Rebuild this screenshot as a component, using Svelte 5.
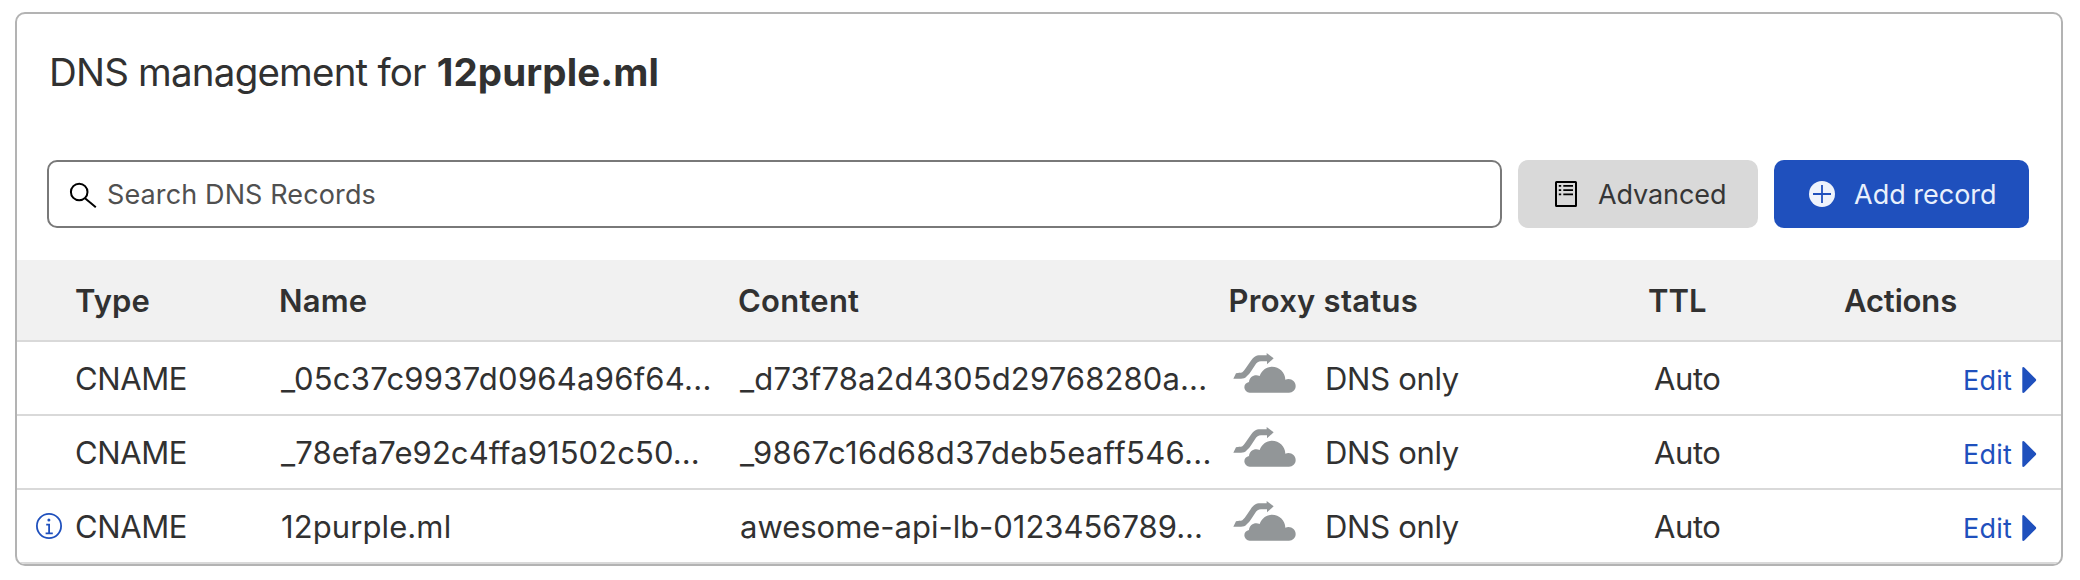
<script>
  const columns = [
    { label: 'Type', track: 0.15, shift: 0 },
    { label: 'Name', track: 0.2, shift: -2 },
    { label: 'Content', track: 0.25, shift: -2 },
    { label: 'Proxy status', track: 0.25, shift: 0.6 },
    { label: 'TTL', track: 0, shift: 0 },
    { label: 'Actions', track: -0.15, shift: 0 }
  ];

  const records = [
    { info: false, name: '_05c37c9937d0964a96f64...', nameTrack: 0.24, content: '_d73f78a2d4305d29768280a...', contentTrack: 0.13 },
    { info: false, name: '_78efa7e92c4ffa91502c50...', nameTrack: 0.08, content: '_9867c16d68d37deb5eaff546...', contentTrack: 0.33 },
    { info: true, name: '12purple.ml', nameTrack: 0.1, content: 'awesome-api-lb-0123456789...', contentTrack: -0.02 }
  ];
</script>

<main class="card">
  <h1>
    <span class="lead">DNS management for</span>
    <strong>12purple.ml</strong>
  </h1>

  <div class="toolbar">
    <label class="search">
      <svg width="28" height="28" viewBox="0 0 28 28" fill="none" stroke="#000" stroke-width="2">
        <circle cx="10.2" cy="12" r="8.3" />
        <path d="M16 18.2 26.8 27.2" />
      </svg>
      <span>Search DNS Records</span>
    </label>
    <button class="advanced">
      <svg width="22" height="26" viewBox="0 0 22 26" fill="none" stroke="#000">
        <rect x="1" y="1" width="20" height="24" rx="0.5" stroke-width="2" />
        <path d="M8.3 4.9H18M8.3 9.2H18M8.3 13.4H18M3.8 4.9H6.2M3.8 9.2H6.2M3.8 13.4H6.2" stroke-width="1.8" />
      </svg>
      <span>Advanced</span>
    </button>
    <button class="add">
      <svg width="26" height="26" viewBox="0 0 26 26">
        <circle cx="13" cy="13" r="13" fill="#eef3fc" />
        <path d="M4 13H22M13 4V22" stroke="#1f50bd" stroke-width="1.8" />
      </svg>
      <span>Add record</span>
    </button>
  </div>

  <div class="row head">
    <span></span>
    {#each columns as c}
      <span style="letter-spacing: {c.track}px; margin-left: {c.shift}px">{c.label}</span>
    {/each}
  </div>

  {#each records as r}
    <div class="row">
      <span class="note">
        {#if r.info}
          <svg width="26" height="26" viewBox="0 0 26 26" fill="none" stroke="#1f50bd" stroke-width="1.8">
            <circle cx="13" cy="13" r="12.1" />
            <path d="M10.2 11.6H13.1V20.3M9.6 20.3H16.8" />
            <circle cx="12.9" cy="6.9" r="1.5" fill="#1f50bd" stroke="none" />
          </svg>
        {/if}
      </span>
      <span class="type">CNAME</span>
      <span style="letter-spacing: {r.nameTrack}px">{r.name}</span>
      <span style="letter-spacing: {r.contentTrack}px">{r.content}</span>
      <span class="proxy">
        <svg width="64" height="40" viewBox="100 40 192 120" fill="#929698">
          <path d="M101 117 L109 101 C116 99 123 101 128 98 C141 87 150 64 163 53 C169 48 175 47 183 47 H201 V40 L222 56 L202 74 V65 H184 C176 65 171 69 167 75 C159 86 152 101 142 109 C136 116 131 117 124 117 Z" />
          <path d="M150 159 A16 16 0 0 1 134 143 C134 134 140 129 148 127 C149 111 166 102 180 109 C186 92 200 81 217 81 C239 81 257 98 257 120 C272 113 288 124 288 139 C288 151 279 159 268 159 Z" />
        </svg>
        <span>DNS only</span>
      </span>
      <span class="ttl">Auto</span>
      <a class="edit" href="#edit">
        <span>Edit</span>
        <svg width="15" height="26" viewBox="0 0 15 26" fill="#1f50bd">
          <path d="M1.2 0Q2 0 2.6 .8L13.8 12.1Q14.6 13 13.8 13.9L2.6 25.2Q2 26 1.2 26Q.3 26 .3 24.8V1.2Q.3 0 1.2 0Z" />
        </svg>
      </a>
    </div>
  {/each}
</main>

<style>
  :global(body) {
    background: #fff;
  }
  .card {
    box-sizing: border-box;
    width: 2048px;
    height: 554px;
    margin: 12px 0 0 15px;
    border: 2px solid #b3b3b3;
    border-radius: 10px;
    overflow: hidden;
    background: #fff;
    color: #313131;
    font-family: Inter, "Liberation Sans", sans-serif;
    font-size: 31px;
    white-space: nowrap;
  }
  :global(#app) {
    display: flow-root;
  }
  svg {
    flex: none;
    display: block;
  }
  h1 {
    display: flex;
    align-items: center;
    gap: 11px;
    box-sizing: border-box;
    height: 116px;
    margin: 0;
    padding-left: 32px;
    font-size: 38.5px;
    font-weight: 400;
  }
  .lead {
    letter-spacing: -0.8px;
  }
  strong {
    font-weight: 700;
    letter-spacing: 0.1px;
  }
  .toolbar {
    display: flex;
    gap: 16px;
    height: 68px;
    margin: 30px 32px 32px 30px;
    font-size: 27px;
  }
  .search,
  button {
    display: flex;
    align-items: center;
    box-sizing: border-box;
    border-radius: 10px;
  }
  .search {
    flex: 1;
    gap: 10px;
    padding-left: 20px;
    border: 2px solid #797979;
    color: #505050;
    letter-spacing: 0.12px;
  }
  button {
    border: 0;
    font: inherit;
  }
  .advanced {
    width: 240px;
    gap: 21px;
    padding: 0 0 0 37px;
    background: #d9d9d9;
    color: #363636;
    letter-spacing: -0.1px;
  }
  .add {
    width: 255px;
    gap: 19px;
    padding: 0 0 0 35px;
    background: #1f50bd;
    color: #e9f0fc;
  }
  .row {
    display: grid;
    grid-template-columns: 58px 206px 459px 488px 420px 196px 1fr;
    align-items: center;
    box-sizing: border-box;
    height: 74px;
    border-bottom: 2px solid #d9d9d9;
  }
  .row > span:not(.note):not(.proxy) {
    padding-top: 1px;
  }
  .head {
    height: 82px;
    background: #f1f1f1;
    font-weight: 600;
  }
  .note {
    padding-left: 19px;
  }
  .type {
    letter-spacing: -0.4px;
  }
  .proxy {
    display: flex;
    gap: 28px;
    padding-left: 5px;
    letter-spacing: -0.3px;
  }
  .proxy svg {
    margin-top: -6px;
  }
  .proxy span {
    padding-top: 1px;
  }
  .ttl {
    padding-left: 6px;
    letter-spacing: -0.4px;
  }
  .edit {
    grid-column: 7;
    display: flex;
    align-items: center;
    justify-content: flex-end;
    gap: 10px;
    padding: 4px 24px 0 0;
    color: #1f50bd;
    font-size: 27px;
    letter-spacing: 0.2px;
    text-decoration: none;
  }
</style>
